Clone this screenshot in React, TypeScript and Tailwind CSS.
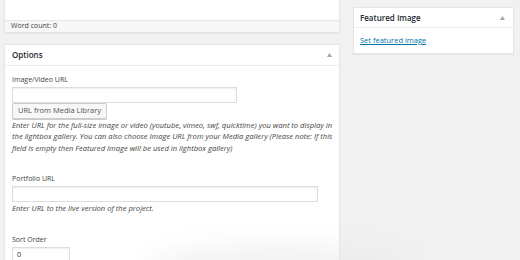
import React from "react";

const Caret = () => (
  <svg width="5" height="4" viewBox="0 0 5 4" className="fill-[#a0a5aa]">
    <polygon points="2.5,0 5,4 0,4" />
  </svg>
);

const Field = ({
  label,
  width,
  value,
  className = "",
}: {
  label: string;
  width: string;
  value?: string;
  className?: string;
}) => (
  <div className={`flex flex-col ${className}`}>
    <label className="text-[7px] leading-[10px] text-[#444]">{label}</label>
    <div
      className={`${width} mt-[2px] h-[16px] border border-[#ddd] bg-white shadow-[inset_0_1px_2px_rgba(0,0,0,0.07)] flex items-center px-[4px] text-[7.5px] text-[#32373c]`}
    >
      {value}
    </div>
  </div>
);

export default function App() {
  return (
    <div className="relative w-[520px] h-[260px] overflow-hidden bg-[#f1f1f1] font-['Open_Sans',sans-serif] flex">
      {/* main column */}
      <div className="ml-[4px] w-[336px] flex flex-col">
        <div className="h-[35px] bg-white border-x border-b border-[#e5e5e5] flex flex-col shadow-[0_1px_1px_rgba(0,0,0,0.04)]">
          <div className="h-[20px]" />
          <div className="flex-1 bg-[#f7f7f7] border-t border-[#e5e5e5] flex items-center pl-[6px] text-[7px] text-[#444]">
            Word count: 0
          </div>
        </div>

        <div className="mt-[11px] flex-1 bg-white border border-[#e5e5e5] shadow-[0_1px_1px_rgba(0,0,0,0.04)]">
          <header className="h-[21px] border-b border-[#eee] flex items-center justify-between pl-[7px] pr-[7px]">
            <h2 className="text-[8px] font-semibold text-[#23282d]">Options</h2>
            <Caret />
          </header>
          <div className="pt-[9px] px-[7px] flex flex-col">
            <Field label="Image/Video URL" width="w-[225px]" />
            <div className="w-[95px] h-[16px] border border-[#ccc] bg-[#f7f7f7] flex items-center justify-center text-[7.5px] text-[#555] shadow-[0_1px_0_#ccc] rounded-[2px]">
              URL from Media Library
            </div>
            <p className="mt-[1px] text-[7.6px] leading-[11.5px] italic text-[#444] whitespace-nowrap">
              Enter URL for the full-size image or video (youtube, vimeo, swf, quicktime) you want to display in
              <br />
              the lightbox gallery. You can also choose Image URL from your Media gallery (Please note: If this
              <br />
              field is empty then Featured Image will be used in lightbox gallery)
            </p>

            <Field label="Portfolio URL" width="w-[306px]" className="mt-[20px]" />
            <p className="mt-[1px] text-[7.6px] leading-[11px] italic text-[#444]">
              Enter URL to the live version of the project.
            </p>

            <Field label="Sort Order" width="w-[58px]" value="0" className="mt-[21px]" />
          </div>
        </div>
      </div>

      {/* sidebar */}
      <div className="ml-[13px] mt-[7px] w-[161px]">
        <div className="bg-white border border-[#e5e5e5] shadow-[0_1px_1px_rgba(0,0,0,0.04)]">
          <header className="h-[20px] border-b border-[#eee] flex items-center justify-between pl-[6px] pr-[8px]">
            <h2 className="text-[8px] font-semibold text-[#23282d]">Featured Image</h2>
            <Caret />
          </header>
          <div className="pt-[7px] pb-[7px] pl-[6px]">
            <a className="text-[7.5px] leading-[11px] text-[#0073aa] underline block">Set featured image</a>
          </div>
        </div>
      </div>

      {/* soft blur artifact near the bottom */}
      <div className="absolute left-[150px] bottom-[-28px] w-[260px] h-[44px] rounded-[50%] bg-[#e6e6e6] blur-[12px] opacity-50 pointer-events-none" />
    </div>
  );
}
